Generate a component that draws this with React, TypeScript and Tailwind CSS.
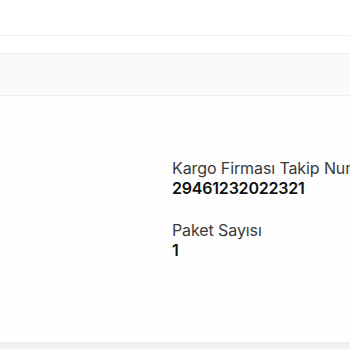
import React from "react";

export default function App() {
  return (
    <div className="w-[350px] h-[350px] overflow-hidden bg-white" style={{ fontFamily: "Inter, 'Noto Sans', sans-serif" }}>
      <div className="h-[35px] bg-white" />
      <div className="h-[19px] bg-white border-t border-b border-[#efefef]" />
      <div className="h-[41px] bg-[#fafafa]" />
      <div className="h-[248px] bg-[#fefefe] border-t border-b border-[#efefef] flex">
        <div className="w-[172px] shrink-0" />
        <div className="flex flex-col pt-[62px] whitespace-nowrap">
          <div className="flex flex-col">
            <span className="text-[16px] leading-[20px] text-[#3a3a3a] tracking-[-0.1px]">Kargo Firması Takip Numarası</span>
            <span className="text-[16px] leading-[21px] font-semibold text-[#111111] tracking-[-0.2px]">29461232022321</span>
          </div>
          <div className="flex flex-col mt-[21px]">
            <span className="text-[16px] leading-[20px] text-[#3a3a3a] tracking-[-0.1px]">Paket Sayısı</span>
            <span className="text-[16px] leading-[21px] font-semibold text-[#111111]">1</span>
          </div>
        </div>
      </div>
      <div className="h-[8px] bg-gradient-to-b from-[#eeeeee] to-[#f8f8f8]" />
    </div>
  );
}
